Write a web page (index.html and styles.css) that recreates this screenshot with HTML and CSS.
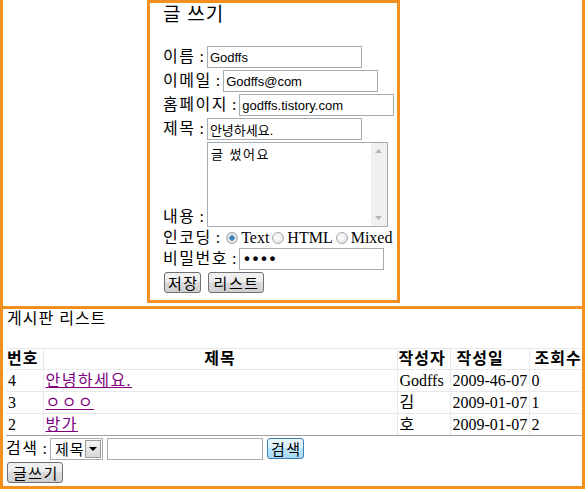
FILE: index.html
```html
<!DOCTYPE html>
<html lang="ko">
<head>
    <meta charset="UTF-8">
    <title>게시판</title>
    <link rel="stylesheet" href="styles.css">
</head>
<body>
    <div class="top">
        <div class="write-box">
            <h2 class="write-title">글 쓰기</h2>
            <div class="row">
                <span class="label"><span class="ko">이름</span> :</span>
                <input type="text" class="field" value="Godffs">
            </div>
            <div class="row">
                <span class="label"><span class="ko">이메일</span> :</span>
                <input type="text" class="field" value="Godffs@com">
            </div>
            <div class="row">
                <span class="label"><span class="ko">홈페이지</span> :</span>
                <input type="text" class="field" value="godffs.tistory.com">
            </div>
            <div class="row">
                <span class="label"><span class="ko">제목</span> :</span>
                <input type="text" class="field" value="안녕하세요.">
            </div>
            <div class="row row-text">
                <span class="label"><span class="ko">내용</span> :</span>
                <div class="text-wrap">
                    <textarea class="text">글 썼어요</textarea>
                    <div class="scroll">
                        <svg width="7" height="4" viewBox="0 0 7 4"><path d="M0 4 L3.5 0 L7 4 Z" fill="#b4b4b4"/></svg>
                        <svg width="7" height="4" viewBox="0 0 7 4"><path d="M0 0 L3.5 4 L7 0 Z" fill="#b4b4b4"/></svg>
                    </div>
                </div>
            </div>
            <div class="row row-enc">
                <span class="label"><span class="ko">인코딩</span> :</span>
                <label class="radio"><input type="radio" name="enc" checked>Text</label>
                <label class="radio"><input type="radio" name="enc">HTML</label>
                <label class="radio"><input type="radio" name="enc">Mixed</label>
            </div>
            <div class="row">
                <span class="label"><span class="ko">비밀번호</span> :</span>
                <input type="password" class="field pw" value="1234">
            </div>
            <div class="row row-btn">
                <button class="btn">저장</button>
                <button class="btn btn-wide">리스트</button>
            </div>
        </div>
    </div>

    <div class="list-box">
        <div class="list-title">게시판 리스트</div>
        <table class="board">
            <colgroup>
                <col style="width:37px">
                <col style="width:354px">
                <col style="width:53px">
                <col style="width:79px">
                <col style="width:53px">
            </colgroup>
            <tr>
                <th class="th-left">번호</th>
                <th>제목</th>
                <th class="th-left">작성자</th>
                <th class="th-date">작성일</th>
                <th class="th-hit">조회수</th>
            </tr>
            <tr>
                <td>4</td>
                <td><a href="#">안녕하세요.</a></td>
                <td>Godffs</td>
                <td>2009-46-07</td>
                <td>0</td>
            </tr>
            <tr>
                <td>3</td>
                <td><a href="#">ㅇㅇㅇ</a></td>
                <td>김</td>
                <td>2009-01-07</td>
                <td>1</td>
            </tr>
            <tr>
                <td>2</td>
                <td><a href="#">방가</a></td>
                <td>호</td>
                <td>2009-01-07</td>
                <td>2</td>
            </tr>
        </table>
        <div class="search">
            <span class="label"><span class="ko">검색</span> :</span>
            <span class="select-wrap">
                <select class="select">
                    <option>제목</option>
                    <option>내용</option>
                </select>
            </span>
            <input type="text" class="field search-field">
            <button class="btn btn-search">검색</button>
        </div>
        <div class="write-row">
            <button class="btn btn-wide">글쓰기</button>
        </div>
    </div>
</body>
</html>
```

FILE: styles.css
```css
body {
    margin: 0;
    font-family: "Liberation Serif", "Noto Sans CJK KR", serif;
    font-size: 16px;
    color: #000;
    background: #fff;
}
.ko {
    letter-spacing: 1.5px;
}
.top {
    width: 579px;
    border-left: 3px solid #f4901f;
    border-right: 3px solid #f4901f;
    padding-bottom: 3px;
}
.write-box {
    width: 234px;
    height: 297px;
    margin-left: 144px;
    padding-left: 13px;
    border: 3px solid #f4901f;
}
.write-title {
    margin: 0 0 19px;
    font-size: 19px;
    font-weight: normal;
    line-height: 24px;
    letter-spacing: 1px;
}
.row {
    display: flex;
    align-items: center;
    height: 22px;
    margin-bottom: 2px;
}
.label {
    line-height: 22px;
    white-space: pre;
    margin-right: 3px;
}
.field {
    box-sizing: border-box;
    width: 155px;
    height: 22px;
    margin: 0;
    padding: 1px 2px;
    border: 1px solid #a5acb2;
    font-family: Arial, "Liberation Sans", "Noto Sans CJK KR", sans-serif;
    font-size: 13px;
    color: #000;
}
.pw {
    width: 145px;
    font-family: "DejaVu Sans", sans-serif;
    font-size: 16px;
    letter-spacing: -1px;
}
.row-text {
    height: 85px;
    align-items: flex-end;
    margin-bottom: 1px;
}
.row-text .label {
    line-height: 20px;
}
.text-wrap {
    display: flex;
    box-sizing: border-box;
    width: 181px;
    height: 85px;
    border: 1px solid #a5acb2;
}
.text {
    flex: 1;
    margin: 0;
    padding: 1px 3px;
    border: none;
    resize: none;
    outline: none;
    font-family: Arial, "Noto Sans CJK KR", sans-serif;
    font-size: 13px;
    letter-spacing: 1.5px;
}
.scroll {
    width: 16px;
    background: #f0f0f0;
    display: flex;
    flex-direction: column;
    justify-content: space-between;
    align-items: center;
    padding: 6px 0;
    box-sizing: border-box;
}
.row-enc {
    height: 20px;
    margin-bottom: 0;
}
.radio {
    display: flex;
    align-items: center;
    line-height: 20px;
}
.radio input {
    appearance: none;
    width: 12px;
    height: 12px;
    margin: 0 3px 0 3px;
    border: 1px solid #a8a8a8;
    border-radius: 50%;
    background: radial-gradient(circle at 40% 40%, #ffffff, #dcdcdc);
    box-sizing: border-box;
}
.radio input:checked {
    background: radial-gradient(circle, #2c6c9e 0, #4f97c9 2.5px, #e8e8e8 3px, #d8d8d8 6px);
}
.row-btn {
    margin-bottom: 0;
    height: 22px;
    align-items: flex-start;
}
.btn {
    height: 21px;
    margin: 0 6px 0 1px;
    padding: 0 1px 0 3px;
    border: 1px solid #707070;
    border-radius: 3px;
    background: linear-gradient(#f2f2f2, #ebebeb 50%, #dddddd 50%, #cfcfcf);
    font-family: "Noto Sans CJK KR", sans-serif;
    font-size: 15px;
    line-height: 18px;
    letter-spacing: 1.5px;
    color: #000;
}
.btn-wide {
    padding: 0 3px 0 5px;
}
.list-box {
    width: 576px;
    height: 177px;
    padding-left: 3px;
    border: 3px solid #f4901f;
}
.list-title {
    line-height: 20px;
    margin-bottom: 19px;
    padding-left: 1px;
    letter-spacing: 1px;
}
.board {
    width: 576px;
    table-layout: fixed;
    border-collapse: collapse;
}
.board th, .board td {
    padding: 0 2px;
    border-top: 1px solid #e8e8e8;
    border-left: 1px solid #e8e8e8;
    text-align: left;
    white-space: nowrap;
    overflow: hidden;
}
.board th:first-child, .board td:first-child {
    border-left: none;
}
.board th {
    height: 20px;
    text-align: center;
    font-weight: bold;
    line-height: 20px;
    letter-spacing: 1px;
}
.board .th-left {
    text-align: left;
    padding-left: 1px;
}
.board .th-date {
    text-align: left;
    padding-left: 6px;
}
.board .th-hit {
    text-align: left;
    padding-left: 5px;
}
.board td {
    height: 21px;
    line-height: 21px;
}
.board tr:last-child td {
    border-bottom: 1px solid #a0a0a0;
}
.board a {
    color: #800080;
    letter-spacing: 1.5px;
}
.search {
    display: flex;
    align-items: center;
    height: 22px;
    margin-top: 2px;
}
.select-wrap {
    position: relative;
    display: inline-block;
}
.select {
    appearance: none;
    box-sizing: border-box;
    width: 53px;
    height: 22px;
    margin: 0;
    padding: 0 18px 0 4px;
    border: 1px solid #a5acb2;
    background: #fff;
    font-family: "Noto Sans CJK KR", sans-serif;
    font-size: 15px;
    line-height: 20px;
    letter-spacing: 1px;
    color: #000;
}
.select-wrap::after {
    content: "";
    position: absolute;
    right: 2px;
    top: 2px;
    width: 14px;
    height: 16px;
    border: 1px solid #9a9a9a;
    background: linear-gradient(#f4f4f4, #d8d8d8);
}
.select-wrap::before {
    content: "";
    position: absolute;
    z-index: 1;
    right: 6px;
    top: 9px;
    border-left: 4px solid transparent;
    border-right: 4px solid transparent;
    border-top: 4px solid #000;
}
.search-field {
    width: 156px;
    margin-left: 4px;
}
.btn-search {
    margin-left: 4px;
    align-self: flex-start;
    border-color: #3c7fb1;
    background: linear-gradient(#eaf6fd, #d9f0fc 50%, #bee6fd 50%, #a7d9f5);
}
.write-row {
    margin-top: 2px;
}
```
